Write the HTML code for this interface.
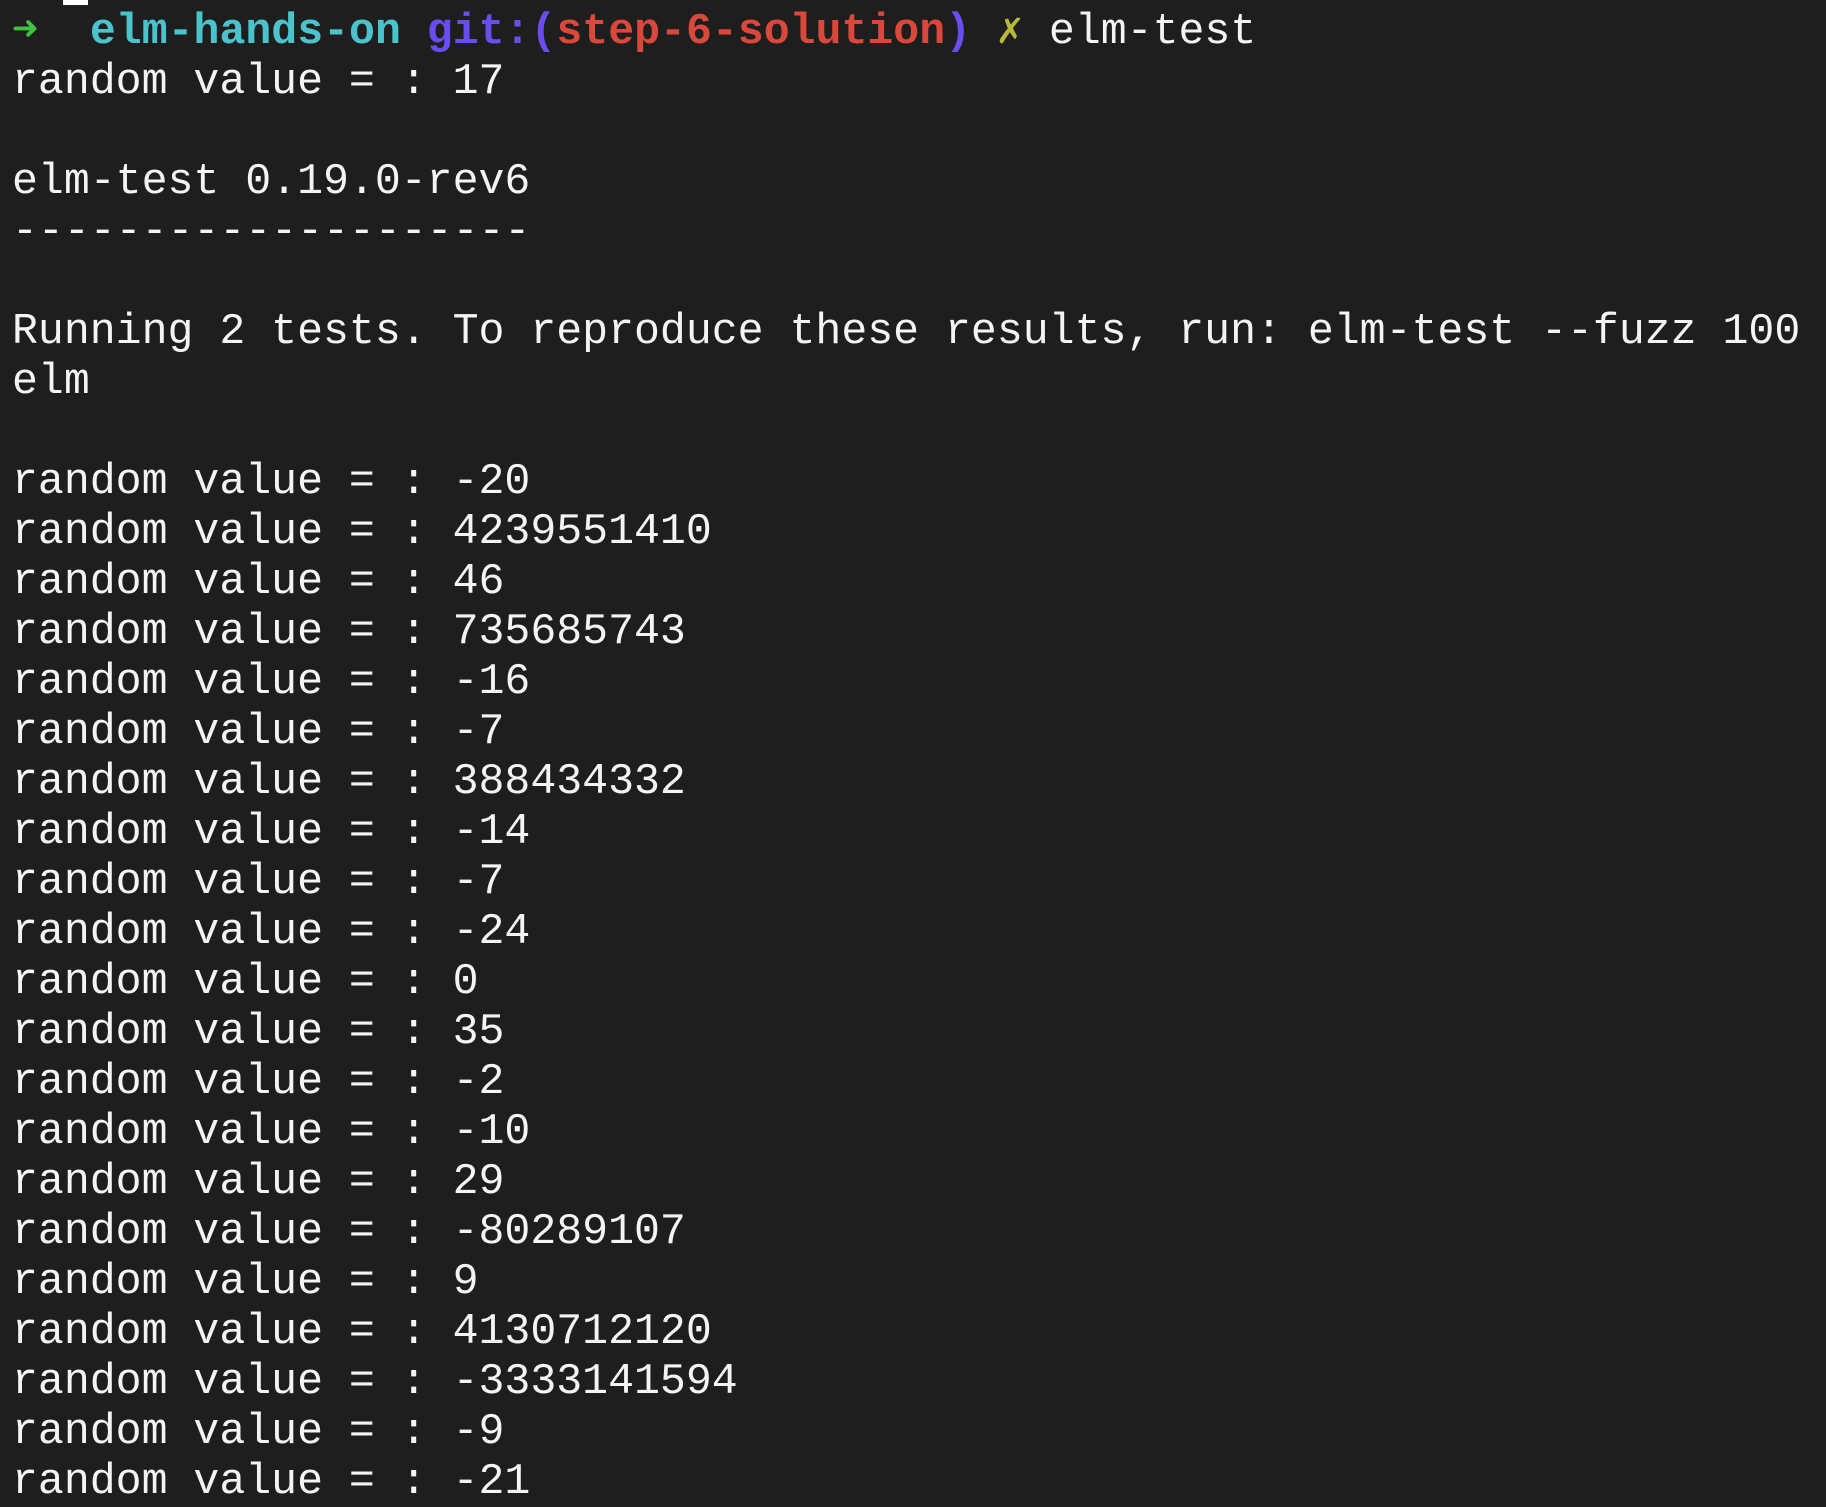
<!DOCTYPE html>
<html><head><meta charset="utf-8"><style>
html,body{margin:0;padding:0;background:#1e1e1e;width:1826px;height:1498px;overflow:hidden}
pre{margin:0;position:absolute;left:12px;top:7px;font-family:"Liberation Mono","DejaVu Sans Mono",monospace;font-size:43.2px;line-height:50px;color:#f4f4f4;white-space:pre}
.cur{position:absolute;left:63px;top:0;width:25px;height:5px;background:#fff}
b{font-weight:bold}
.g{color:#3fc23f}.c{color:#4bc3cc}.p{color:#6b4cf0}.r{color:#d9483b}.y{color:#b8b83a}
</style></head><body>
<div class="cur"></div>
<pre><b class="g">➜</b>  <b class="c">elm-hands-on</b> <b class="p">git:(</b><b class="r">step-6-solution</b><b class="p">)</b> <b class="y">✗</b> elm-test
random value = : 17

elm-test 0.19.0-rev6
--------------------

Running 2 tests. To reproduce these results, run: elm-test --fuzz 100
elm

random value = : -20
random value = : 4239551410
random value = : 46
random value = : 735685743
random value = : -16
random value = : -7
random value = : 388434332
random value = : -14
random value = : -7
random value = : -24
random value = : 0
random value = : 35
random value = : -2
random value = : -10
random value = : 29
random value = : -80289107
random value = : 9
random value = : 4130712120
random value = : -3333141594
random value = : -9
random value = : -21</pre>
</body></html>
